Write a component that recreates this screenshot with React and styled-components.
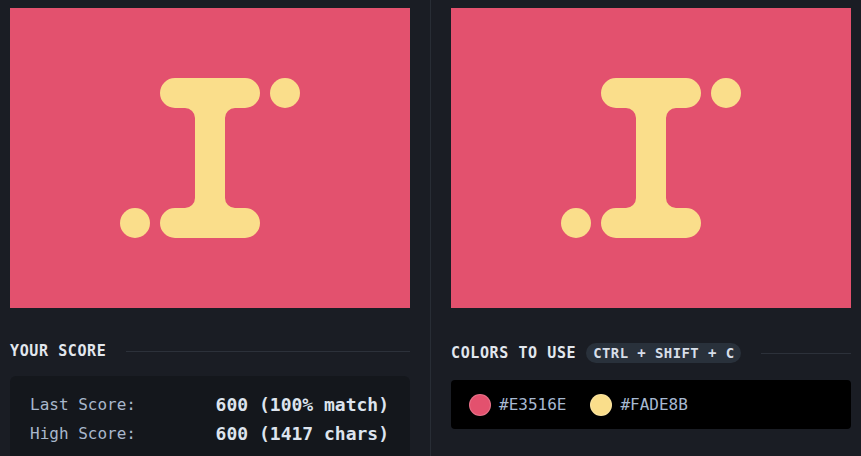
import React from "react";
import styled, { createGlobalStyle } from "styled-components";

const Global = createGlobalStyle`
  html, body { margin: 0; padding: 0; background: #1a1d24; }
  body { font-family: "DejaVu Sans Mono", "Liberation Mono", monospace; overflow: hidden; }
`;

const Page = styled.div`
  display: grid;
  grid-template-columns: 430px 1px 430px;
  height: 456px;
  background: #1a1d24;
`;

const Column = styled.div`
  display: flex;
  flex-direction: column;
  padding: ${(p) => (p.$side === "left" ? "8px 20px 0 10px" : "8px 10px 0 20px")};
`;

const Divider = styled.div`
  background: #282d35;
`;

const Canvas = styled.svg`
  display: block;
  width: 400px;
  height: 300px;
  flex: none;
`;

const HeadingRow = styled.div`
  display: flex;
  align-items: center;
  gap: 10px;
  margin-top: 35px;
  margin-bottom: 17px;
`;

const Heading = styled.h2`
  margin: 0;
  font-size: 15px;
  line-height: 16px;
  font-weight: 700;
  letter-spacing: 0.6px;
  color: #e2e7ee;
  white-space: nowrap;
`;

const Shortcut = styled.span`
  display: inline-flex;
  align-items: center;
  height: 20px;
  padding: 0 7px;
  border-radius: 10px;
  background: #29313b;
  color: #d7dee8;
  font-size: 14px;
  font-weight: 700;
  letter-spacing: 0.4px;
  white-space: nowrap;
`;

const Rule = styled.div`
  flex: 1;
  height: 1px;
  margin-left: 10px;
  background: #2c313a;
`;

const ScoreBox = styled.div`
  background: #14171c;
  border-radius: 6px 6px 0 0;
  padding: 14px 21px 20px 20px;
`;

const ScoreRow = styled.div`
  display: flex;
  justify-content: space-between;
  align-items: center;
  height: 29px;
`;

const Label = styled.span`
  font-size: 16px;
  color: #a9b7cc;
`;

const Value = styled.span`
  font-size: 18px;
  font-weight: 700;
  color: #dde4ee;
`;

const ColorsBox = styled.div`
  display: flex;
  align-items: center;
  gap: 24px;
  height: 49px;
  padding: 0 18px;
  background: #000;
  border-radius: 4px;
`;

const Swatch = styled.div`
  display: flex;
  align-items: center;
  gap: 8px;
`;

const Dot = styled.span`
  width: 22px;
  height: 22px;
  border-radius: 50%;
  background: ${(p) => p.$color};
  box-sizing: border-box;
  border: 1px solid rgba(255, 255, 255, 0.18);
`;

const Hex = styled.span`
  font-size: 16px;
  color: #a7b9d2;
`;

function Target() {
  return (
    <Canvas viewBox="0 0 400 300">
      <rect width="400" height="300" fill="#E3516E" />
      <path
        fill="#FADE8B"
        d="M165 70 H235 A15 15 0 0 1 235 100 H225 A10 10 0 0 0 215 110 V190 A10 10 0 0 0 225 200 H235 A15 15 0 0 1 235 230 H165 A15 15 0 0 1 165 200 H175 A10 10 0 0 0 185 190 V110 A10 10 0 0 0 175 100 H165 A15 15 0 0 1 165 70 Z"
      />
      <circle cx="275" cy="85" r="15" fill="#FADE8B" />
      <circle cx="125" cy="215" r="15" fill="#FADE8B" />
    </Canvas>
  );
}

export default function App() {
  return (
    <>
      <Global />
      <Page>
        <Column $side="left">
          <Target />
          <HeadingRow>
            <Heading>YOUR SCORE</Heading>
            <Rule />
          </HeadingRow>
          <ScoreBox>
            <ScoreRow>
              <Label>Last Score:</Label>
              <Value>600 (100% match)</Value>
            </ScoreRow>
            <ScoreRow>
              <Label>High Score:</Label>
              <Value>600 (1417 chars)</Value>
            </ScoreRow>
          </ScoreBox>
        </Column>
        <Divider />
        <Column $side="right">
          <Target />
          <HeadingRow>
            <Heading>COLORS TO USE</Heading>
            <Shortcut>CTRL + SHIFT + C</Shortcut>
            <Rule />
          </HeadingRow>
          <ColorsBox>
            <Swatch>
              <Dot $color="#E3516E" />
              <Hex>#E3516E</Hex>
            </Swatch>
            <Swatch>
              <Dot $color="#FADE8B" />
              <Hex>#FADE8B</Hex>
            </Swatch>
          </ColorsBox>
        </Column>
      </Page>
    </>
  );
}
